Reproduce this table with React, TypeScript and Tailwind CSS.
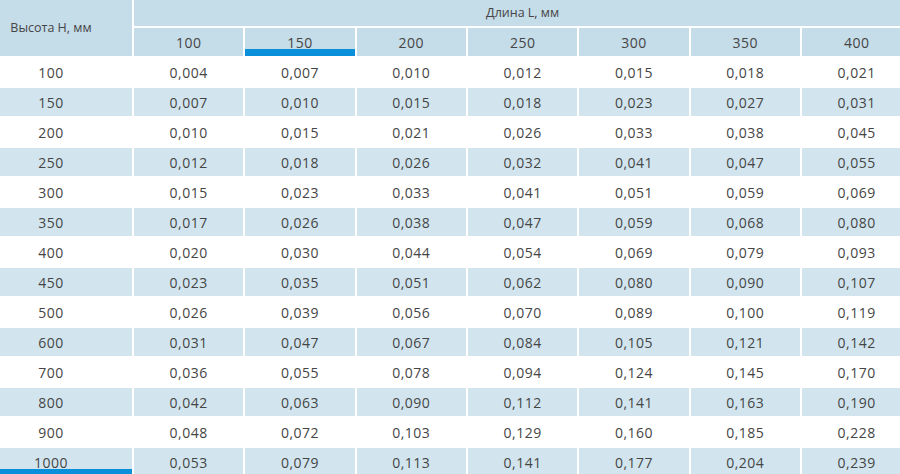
const lengths = [100, 150, 200, 250, 300, 350, 400]

const rows: [number, string[]][] = [
  [100, ["0,004", "0,007", "0,010", "0,012", "0,015", "0,018", "0,021"]],
  [150, ["0,007", "0,010", "0,015", "0,018", "0,023", "0,027", "0,031"]],
  [200, ["0,010", "0,015", "0,021", "0,026", "0,033", "0,038", "0,045"]],
  [250, ["0,012", "0,018", "0,026", "0,032", "0,041", "0,047", "0,055"]],
  [300, ["0,015", "0,023", "0,033", "0,041", "0,051", "0,059", "0,069"]],
  [350, ["0,017", "0,026", "0,038", "0,047", "0,059", "0,068", "0,080"]],
  [400, ["0,020", "0,030", "0,044", "0,054", "0,069", "0,079", "0,093"]],
  [450, ["0,023", "0,035", "0,051", "0,062", "0,080", "0,090", "0,107"]],
  [500, ["0,026", "0,039", "0,056", "0,070", "0,089", "0,100", "0,119"]],
  [600, ["0,031", "0,047", "0,067", "0,084", "0,105", "0,121", "0,142"]],
  [700, ["0,036", "0,055", "0,078", "0,094", "0,124", "0,145", "0,170"]],
  [800, ["0,042", "0,063", "0,090", "0,112", "0,141", "0,163", "0,190"]],
  [900, ["0,048", "0,072", "0,103", "0,129", "0,160", "0,185", "0,228"]],
  [1000, ["0,053", "0,079", "0,113", "0,141", "0,177", "0,204", "0,239"]],
]

export default function App() {
  return (
    <div className="w-[900px] h-[474px] overflow-hidden bg-white text-[#454545] font-['Open_Sans',sans-serif]">
      <div className="grid w-[911px] grid-cols-[132px_repeat(7,109.33px)] grid-rows-[26px_28px] auto-rows-[28px] gap-[2px] bg-white">
        {/* header */}
        <div className="row-span-2 flex items-center justify-center pr-[30px] bg-[#c5dce9] text-[12.5px]">
          Высота Н, мм
        </div>
        <div className="col-span-7 flex items-center justify-center bg-[#c5dce9] text-[12.5px]">
          Длина L, мм
        </div>
        {lengths.map((l, i) => (
          <div key={l} className="relative flex items-center justify-center bg-[#c5dce9] text-[14px] tracking-[0.5px]">
            {l}
            {i === 1 && <div className="absolute left-0 right-0 bottom-0 h-[7px] bg-[#0a8fdb]" />}
          </div>
        ))}

        {/* body */}
        {rows.map(([h, vals], r) => {
          const bg = r % 2 === 1 ? "bg-[#d2e5ef]" : "bg-white"
          return [
            <div key={`h${h}`} className={`relative flex items-center justify-center pr-[30px] text-[14px] tracking-[0.5px] ${bg}`}>
              {h}
              {r === rows.length - 1 && <div className="absolute left-0 right-0 top-[21px] h-[13px] bg-[#0a8fdb]" />}
            </div>,
            ...vals.map((v, c) => (
              <div key={`${h}-${c}`} className={`flex items-center justify-center text-[14px] tracking-[0.5px] ${bg}`}>
                {v}
              </div>
            )),
          ]
        })}
      </div>
    </div>
  )
}
